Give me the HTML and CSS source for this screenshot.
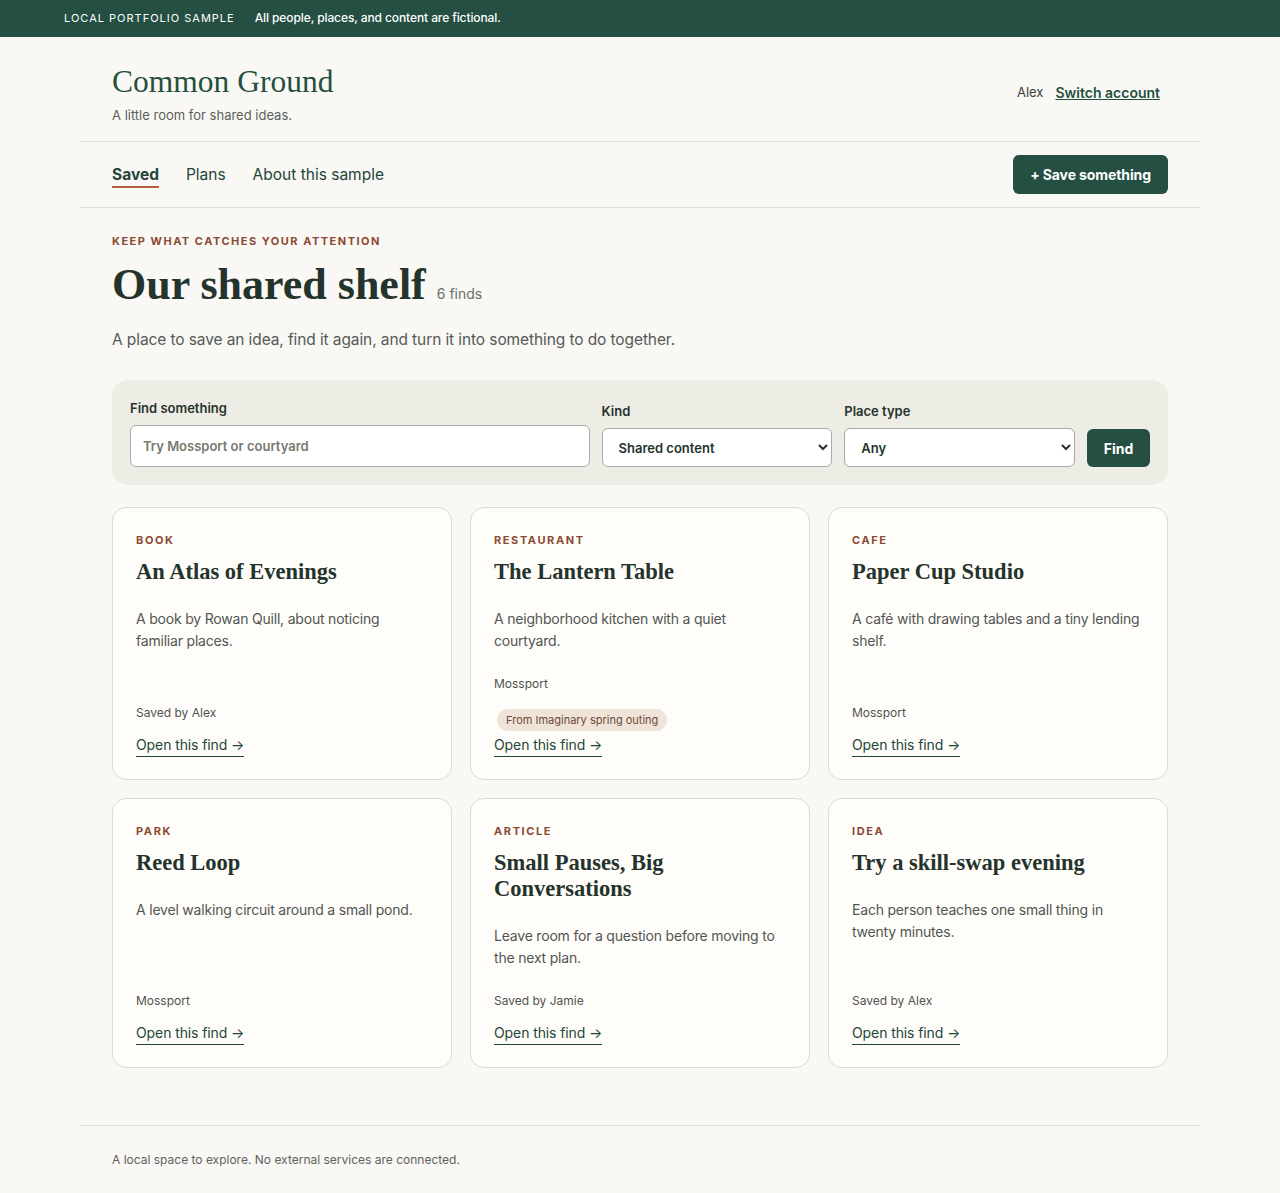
FILE: index.html
```html
<!DOCTYPE html>
<html lang="en">
<head>
    <meta charset="UTF-8">
    <title>Common Ground</title>
    <link rel="stylesheet" href="styles.css">
</head>
<body>
<div class="notice">
    <span class="notice-tag">LOCAL PORTFOLIO SAMPLE</span>
    <span class="notice-text">All people, places, and content are fictional.</span>
</div>

<div class="page">
    <header class="masthead">
        <div class="brand">
            <h1 class="brand-name">Common Ground</h1>
            <p class="brand-line">A little room for shared ideas.</p>
        </div>
        <div class="account">
            <span class="account-name">Alex</span>
            <a href="#" class="account-switch">Switch account</a>
        </div>
    </header>

    <nav class="nav">
        <div class="nav-links">
            <a href="#" class="nav-link active">Saved</a>
            <a href="#" class="nav-link">Plans</a>
            <a href="#" class="nav-link">About this sample</a>
        </div>
        <a href="#" class="btn btn-save">+ Save something</a>
    </nav>

    <main class="main">
        <p class="eyebrow">KEEP WHAT CATCHES YOUR ATTENTION</p>
        <h2 class="title">Our shared shelf <span class="count">6 finds</span></h2>
        <p class="lead">A place to save an idea, find it again, and turn it into something to do together.</p>

        <form class="filters">
            <label class="field field-search">
                <span class="field-label">Find something</span>
                <input type="text" class="input" placeholder="Try Mossport or courtyard">
            </label>
            <label class="field field-select">
                <span class="field-label">Kind</span>
                <select class="select">
                    <option>Shared content</option>
                </select>
            </label>
            <label class="field field-select">
                <span class="field-label">Place type</span>
                <select class="select">
                    <option>Any</option>
                </select>
            </label>
            <button type="button" class="btn btn-find">Find</button>
        </form>

        <div class="grid">
            <article class="card">
                <p class="card-kind">BOOK</p>
                <h3 class="card-title">An Atlas of Evenings</h3>
                <p class="card-text">A book by Rowan Quill, about noticing familiar places.</p>
                <p class="card-meta">Saved by Alex</p>
                <a href="#" class="card-link">Open this find →</a>
            </article>
            <article class="card">
                <p class="card-kind">RESTAURANT</p>
                <h3 class="card-title">The Lantern Table</h3>
                <p class="card-text">A neighborhood kitchen with a quiet courtyard.</p>
                <p class="card-meta">Mossport</p>
                <span class="pill">From Imaginary spring outing</span>
                <a href="#" class="card-link">Open this find →</a>
            </article>
            <article class="card">
                <p class="card-kind">CAFE</p>
                <h3 class="card-title">Paper Cup Studio</h3>
                <p class="card-text">A café with drawing tables and a tiny lending shelf.</p>
                <p class="card-meta">Mossport</p>
                <a href="#" class="card-link">Open this find →</a>
            </article>
            <article class="card">
                <p class="card-kind">PARK</p>
                <h3 class="card-title">Reed Loop</h3>
                <p class="card-text">A level walking circuit around a small pond.</p>
                <p class="card-meta">Mossport</p>
                <a href="#" class="card-link">Open this find →</a>
            </article>
            <article class="card">
                <p class="card-kind">ARTICLE</p>
                <h3 class="card-title">Small Pauses, Big Conversations</h3>
                <p class="card-text">Leave room for a question before moving to the next plan.</p>
                <p class="card-meta">Saved by Jamie</p>
                <a href="#" class="card-link">Open this find →</a>
            </article>
            <article class="card">
                <p class="card-kind">IDEA</p>
                <h3 class="card-title">Try a skill-swap evening</h3>
                <p class="card-text">Each person teaches one small thing in twenty minutes.</p>
                <p class="card-meta">Saved by Alex</p>
                <a href="#" class="card-link">Open this find →</a>
            </article>
        </div>
    </main>

    <footer class="footer">
        <p>A local space to explore. No external services are connected.</p>
    </footer>
</div>
</body>
</html>
```

FILE: styles.css
```css
*{
    margin: 0;
    padding: 0;
    box-sizing: border-box;
}
body{
    background: #f9f8f4;
    color: #26332d;
    font-family: Inter, "Noto Sans", sans-serif;
}
a{
    color: inherit;
}

/* top notice */
.notice{
    height: 37px;
    background: #244f42;
    color: #fff;
    display: flex;
    align-items: center;
    padding: 0 0 2px 64px;
    gap: 20px;
}
.notice-tag{
    font-size: 11px;
    letter-spacing: 1px;
}
.notice-text{
    font-size: 12px;
    font-weight: 500;
    letter-spacing: -0.1px;
}

.page{
    width: 1120px;
    margin: 0 auto;
}

/* header */
.masthead{
    display: flex;
    justify-content: space-between;
    align-items: center;
    padding: 28px 40px 18px 32px;
    border-bottom: 1px solid #dedcd5;
}
.brand-name{
    font-family: "Liberation Serif", serif;
    font-weight: 400;
    font-size: 31.5px;
    line-height: 34px;
    color: #24503f;
}
.brand-line{
    margin-top: 8px;
    font-size: 13px;
    line-height: 16px;
    color: #5b5f5c;
}
.account{
    display: flex;
    align-items: center;
    gap: 12px;
    margin-bottom: 4px;
}
.account-name{
    font-size: 13px;
    color: #3a3f3c;
}
.account-switch{
    font-size: 14px;
    font-weight: 600;
    color: #24503f;
}

/* nav */
.nav{
    display: flex;
    justify-content: space-between;
    align-items: center;
    padding: 13px 32px;
    border-bottom: 1px solid #dedcd5;
}
.nav-links{
    display: flex;
    gap: 27px;
}
.nav-link{
    font-size: 15.5px;
    line-height: 20px;
    color: #24453a;
    text-decoration: none;
    padding-bottom: 1px;
    border-bottom: 2px solid transparent;
    margin-top: 3px;
}
.nav-link.active{
    font-weight: 700;
    border-bottom-color: #b0603f;
}
.btn{
    display: inline-flex;
    align-items: center;
    justify-content: center;
    background: #244f42;
    color: #fff;
    font-family: Inter, "Noto Sans", sans-serif;
    font-weight: 700;
    text-decoration: none;
    border: none;
    border-radius: 6px;
}
.btn-save{
    height: 39px;
    padding: 0 17px;
    font-size: 14px;
    letter-spacing: -0.1px;
}

/* main */
.main{
    padding: 26px 32px 0 32px;
}
.eyebrow{
    font-size: 11px;
    line-height: 14px;
    font-weight: 700;
    letter-spacing: 1.5px;
    color: #8b4a33;
}
.title{
    margin-top: 9px;
    font-family: "Liberation Serif", serif;
    font-weight: 700;
    font-size: 44px;
    line-height: 56px;
    color: #24332c;
}
.count{
    font-family: Inter, "Noto Sans", sans-serif;
    font-weight: 400;
    font-size: 14px;
    color: #6b6e6b;
}
.lead{
    margin-top: 7px;
    font-size: 15.5px;
    line-height: 22px;
    letter-spacing: -0.1px;
    color: #555a57;
}

/* filters */
.filters{
    margin-top: 29px;
    background: #edece5;
    border-radius: 16px;
    padding: 20px 18px 18px 18px;
    display: flex;
    align-items: flex-end;
    gap: 12px;
}
.field{
    display: flex;
    flex-direction: column;
    gap: 9px;
}
.field-search{
    width: 460px;
}
.field-select{
    width: 231px;
}
.field-label{
    font-size: 13px;
    font-weight: 600;
    color: #26332d;
}
.input, .select{
    font-family: Inter, "Noto Sans", sans-serif;
    font-size: 13px;
    font-weight: 600;
    color: #26332d;
    background: #fff;
    border: 1px solid #a9aaa5;
    border-radius: 6px;
}
.input{
    height: 42px;
    padding: 0 12px;
}
.input::placeholder{
    color: #77786f;
}
.select{
    height: 39px;
    padding: 0 12px;
}
.btn-find{
    height: 38px;
    width: 63px;
    font-size: 14px;
}

/* cards */
.grid{
    margin-top: 22px;
    display: grid;
    grid-template-columns: repeat(3, 1fr);
    gap: 18px 18px;
}
.card{
    display: flex;
    flex-direction: column;
    align-items: flex-start;
    background: #fffdf9;
    border: 1px solid #dcdad3;
    border-radius: 14px;
    padding: 25px 23px 22px 23px;
}
.card-kind{
    font-size: 11px;
    line-height: 14px;
    font-weight: 700;
    letter-spacing: 1.6px;
    color: #8b4a33;
}
.card-title{
    margin-top: 12px;
    font-family: "Liberation Serif", serif;
    font-weight: 700;
    font-size: 22.5px;
    line-height: 26px;
    color: #24332c;
}
.card-text{
    margin-top: 23px;
    font-size: 14px;
    line-height: 22px;
    letter-spacing: -0.2px;
    color: #515653;
}
.card-meta{
    margin-top: auto;
    padding-top: 24px;
    font-size: 12px;
    line-height: 16px;
    color: #4f5350;
}
.pill{
    margin-top: 17px;
    margin-left: 3px;
    padding: 4px 9px;
    border-radius: 12px;
    background: #f0e4d9;
    font-size: 11px;
    line-height: 14px;
    color: #6c4a38;
}
.card-link{
    margin-top: 4px;
    font-size: 14px;
    line-height: 20px;
    letter-spacing: -0.1px;
    color: #24453a;
    text-decoration: none;
    padding-bottom: 1px;
    border-bottom: 1px solid #24453a;
}
.card-meta + .card-link{
    margin-top: 14px;
}

/* footer */
.footer{
    margin-top: 57px;
    border-top: 1px solid #dedcd5;
    padding: 26px 32px 28px 32px;
    font-size: 12px;
    color: #5e625f;
}
```
